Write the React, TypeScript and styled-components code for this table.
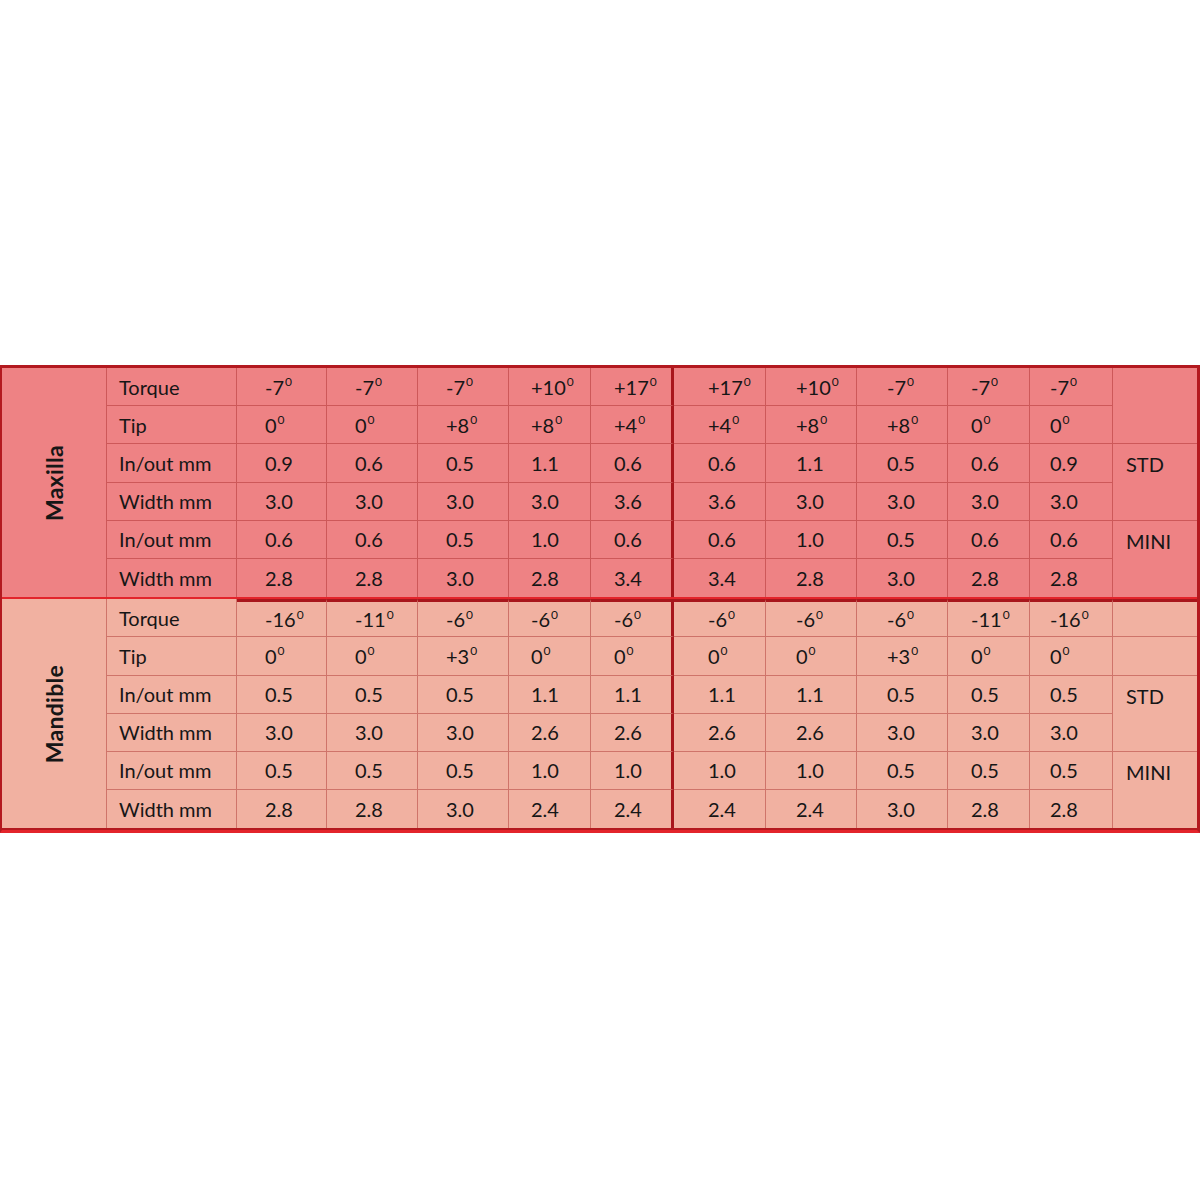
import React from "react";
import styled, { createGlobalStyle } from "styled-components";

const Global = createGlobalStyle`
  html, body { margin: 0; padding: 0; background: #ffffff; }
  body { font-family: "Lato", "Noto Sans", sans-serif; color: #161616; }
`;

const Page = styled.div`
  width: 1200px;
  height: 1200px;
  padding-top: 365px;
  box-sizing: border-box;
`;

const Table = styled.div`
  width: 1200px;
  box-sizing: border-box;
  border-top: 3px solid #b3191f;
  border-left: 2px solid #b3191f;
  border-right: 3px solid #b3191f;
  border-bottom: 3px solid #e3242b;
  display: flex;
  flex-direction: column;
`;

const COLS = "105px 130px 90px 91px 91px 82px 83px 92px 91px 91px 82px 83px 84px";

const Section = styled.div<{ $bg: string; $bottom: string }>`
  display: grid;
  grid-template-columns: ${COLS};
  grid-template-rows: repeat(6, 38.2px);
  background: ${(p) => p.$bg};
  border-bottom: ${(p) => p.$bottom};
`;

const line = "1px solid rgba(160, 30, 30, 0.42)";
const bar = "3px solid #a8161c";

const LabelCell = styled.div`
  grid-row: span 6;
  border-right: ${line};
  display: flex;
  align-items: center;
  justify-content: center;
  overflow: hidden;
`;

const Rotated = styled.span`
  display: inline-block;
  transform: rotate(-90deg);
  font-size: 23px;
  font-weight: 700;
  white-space: nowrap;
  letter-spacing: 0.3px;
`;

const Cell = styled.div<{ $pad: number; $last?: boolean; $thick?: boolean; $topBar?: boolean }>`
  box-sizing: border-box;
  display: flex;
  align-items: center;
  padding-left: ${(p) => p.$pad}px;
  font-size: 20px;
  white-space: nowrap;
  border-right: ${(p) => (p.$thick ? bar : line)};
  border-bottom: ${(p) => (p.$last ? "none" : line)};
  border-top: ${(p) => (p.$topBar ? bar : "none")};
`;

const SizeCell = styled.div<{ $span: number; $last?: boolean; $topBar?: boolean }>`
  box-sizing: border-box;
  grid-row: span ${(p) => p.$span};
  display: flex;
  align-items: flex-start;
  padding-left: 13px;
  padding-top: ${(p) => (p.$topBar ? 5 : 8)}px;
  font-size: 20px;
  border-bottom: ${(p) => (p.$last ? "none" : line)};
  border-top: ${(p) => (p.$topBar ? bar : "none")};
`;

const Sup = styled.span`
  font-size: 12px;
  position: relative;
  top: -5px;
  margin-left: 1px;
`;

const PADS = [28, 28, 28, 22, 23, 34, 30, 30, 23, 20];

type Row = { name: string; values: string[] };

const Value: React.FC<{ v: string }> = ({ v }) => {
  if (v.endsWith("°")) {
    return (
      <>
        {v.slice(0, -1)}
        <Sup>0</Sup>
      </>
    );
  }
  return <>{v}</>;
};

const maxilla: Row[] = [
  { name: "Torque", values: ["-7°", "-7°", "-7°", "+10°", "+17°", "+17°", "+10°", "-7°", "-7°", "-7°"] },
  { name: "Tip", values: ["0°", "0°", "+8°", "+8°", "+4°", "+4°", "+8°", "+8°", "0°", "0°"] },
  { name: "In/out mm", values: ["0.9", "0.6", "0.5", "1.1", "0.6", "0.6", "1.1", "0.5", "0.6", "0.9"] },
  { name: "Width mm", values: ["3.0", "3.0", "3.0", "3.0", "3.6", "3.6", "3.0", "3.0", "3.0", "3.0"] },
  { name: "In/out mm", values: ["0.6", "0.6", "0.5", "1.0", "0.6", "0.6", "1.0", "0.5", "0.6", "0.6"] },
  { name: "Width mm", values: ["2.8", "2.8", "3.0", "2.8", "3.4", "3.4", "2.8", "3.0", "2.8", "2.8"] },
];

const mandible: Row[] = [
  { name: "Torque", values: ["-16°", "-11°", "-6°", "-6°", "-6°", "-6°", "-6°", "-6°", "-11°", "-16°"] },
  { name: "Tip", values: ["0°", "0°", "+3°", "0°", "0°", "0°", "0°", "+3°", "0°", "0°"] },
  { name: "In/out mm", values: ["0.5", "0.5", "0.5", "1.1", "1.1", "1.1", "1.1", "0.5", "0.5", "0.5"] },
  { name: "Width mm", values: ["3.0", "3.0", "3.0", "2.6", "2.6", "2.6", "2.6", "3.0", "3.0", "3.0"] },
  { name: "In/out mm", values: ["0.5", "0.5", "0.5", "1.0", "1.0", "1.0", "1.0", "0.5", "0.5", "0.5"] },
  { name: "Width mm", values: ["2.8", "2.8", "3.0", "2.4", "2.4", "2.4", "2.4", "3.0", "2.8", "2.8"] },
];

type Side = { span: number; text: string };

const maxSides: (Side | null)[] = [
  { span: 2, text: "" },
  null,
  { span: 2, text: "STD" },
  null,
  { span: 2, text: "MINI" },
  null,
];

const manSides: (Side | null)[] = [
  { span: 1, text: "" },
  { span: 1, text: "" },
  { span: 2, text: "STD" },
  null,
  { span: 2, text: "MINI" },
  null,
];

const Block: React.FC<{
  label: string;
  rows: Row[];
  sides: (Side | null)[];
  bg: string;
  bottom: string;
  topBar?: boolean;
}> = ({ label, rows, sides, bg, bottom, topBar }) => (
  <Section $bg={bg} $bottom={bottom}>
    <LabelCell>
      <Rotated>{label}</Rotated>
    </LabelCell>
    {rows.map((r, i) => {
      const last = i === rows.length - 1;
      const side = sides[i];
      const first = !!topBar && i === 0;
      return (
        <React.Fragment key={i}>
          <Cell $pad={12} $last={last}>{r.name}</Cell>
          {r.values.map((v, j) => (
            <Cell key={j} $pad={PADS[j]} $last={last} $thick={j === 4} $topBar={first}>
              <Value v={v} />
            </Cell>
          ))}
          {side && (
            <SizeCell $span={side.span} $last={i + side.span >= rows.length} $topBar={first}>
              {side.text}
            </SizeCell>
          )}
        </React.Fragment>
      );
    })}
  </Section>
);

export default function App() {
  return (
    <>
      <Global />
      <Page>
        <Table>
          <Block
            label="Maxilla"
            rows={maxilla}
            sides={maxSides}
            bg="#ee8284"
            bottom="2px solid #e3242b"
          />
          <Block
            label="Mandible"
            rows={mandible}
            sides={manSides}
            bg="#f1b1a1"
            bottom="2px solid #b3191f"
            topBar
          />
        </Table>
      </Page>
    </>
  );
}
